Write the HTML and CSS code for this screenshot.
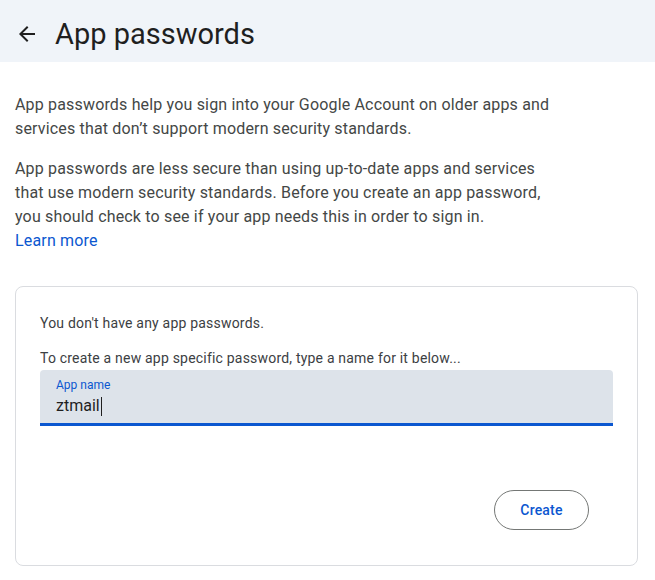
FILE: index.html
```html
<!DOCTYPE html>
<html>
<head>
<meta charset="utf-8">
<link rel="stylesheet" href="styles.css">
</head>
<body>
<header class="topbar">
  <svg class="back" width="24" height="24" viewBox="0 0 24 24"><path d="M20 11H7.83l5.59-5.59L12 4l-8 8 8 8 1.41-1.41L7.83 13H20v-2z" fill="#1f1f1f"/></svg>
  <h1 class="title">App passwords</h1>
</header>
<main class="content">
  <p class="para">App passwords help you sign into your Google Account on older apps and services that don’t support modern security standards.</p>
  <p class="para">App passwords are less secure than using up-to-date apps and services that use modern security standards. Before you create an app password, you should check to see if your app needs this in order to sign in.<br><a class="link" href="#">Learn more</a></p>
  <section class="card">
    <p class="note">You don't have any app passwords.</p>
    <p class="note hint">To create a new app specific password, type a name for it below...</p>
    <div class="field">
      <span class="label">App name</span>
      <span class="value">ztmail<span class="caret"></span></span>
    </div>
    <div class="actions">
      <button class="btn">Create</button>
    </div>
  </section>
</main>
</body>
</html>
```
FILE: styles.css
```css
* { box-sizing: border-box; }
body {
  margin: 0;
  background: #fff;
  font-family: Roboto, "Liberation Sans", sans-serif;
  color: #1f1f1f;
}
.topbar {
  background: #f0f4f9;
  height: 62px;
  display: flex;
  align-items: center;
  padding-left: 15px;
  padding-top: 6px;
}
.back { margin-right: 16px; }
.title {
  margin: 0;
  font-size: 29px;
  font-weight: 400;
  color: #1f1f1f;
}
.content {
  padding: 31px 17px 0 15px;
}
.para {
  margin: 0 0 16px;
  font-size: 16px;
  line-height: 24px;
  color: #444746;
  letter-spacing: 0.17px;
  max-width: 540px;
}
.link {
  color: #0b57d0;
  text-decoration: none;
}
.card {
  margin-top: 33px;
  border: 1px solid #dadce0;
  border-radius: 8px;
  height: 280px;
  padding: 26px 24px 0 24px;
}
.note {
  margin: 0;
  font-size: 14px;
  line-height: 20px;
  color: #3c4043;
  letter-spacing: 0.2px;
}
.hint { margin-top: 15px; }
.field {
  margin-top: 2px;
  background: #dde3ea;
  border-radius: 4px 4px 0 0;
  border-bottom: 3px solid #0b57d0;
  height: 56px;
  padding: 7px 16px 0;
  display: flex;
  flex-direction: column;
}
.label {
  font-size: 12px;
  line-height: 16px;
  color: #0b57d0;
}
.value {
  font-size: 16px;
  line-height: 24px;
  margin-top: 1px;
  color: #1f1f1f;
  display: flex;
  align-items: center;
}
.caret {
  display: inline-block;
  width: 1px;
  height: 19px;
  background: #1f1f1f;
  margin-left: 1px;
}
.actions {
  display: flex;
  justify-content: flex-end;
  margin-top: 64px;
  padding-right: 24px;
}
.btn {
  font-family: Roboto, "Liberation Sans", sans-serif;
  font-size: 14px;
  font-weight: 500;
  letter-spacing: 0.2px;
  color: #0b57d0;
  background: #fff;
  border: 1px solid #747775;
  border-radius: 20px;
  height: 40px;
  width: 95px;
  cursor: pointer;
}
```
